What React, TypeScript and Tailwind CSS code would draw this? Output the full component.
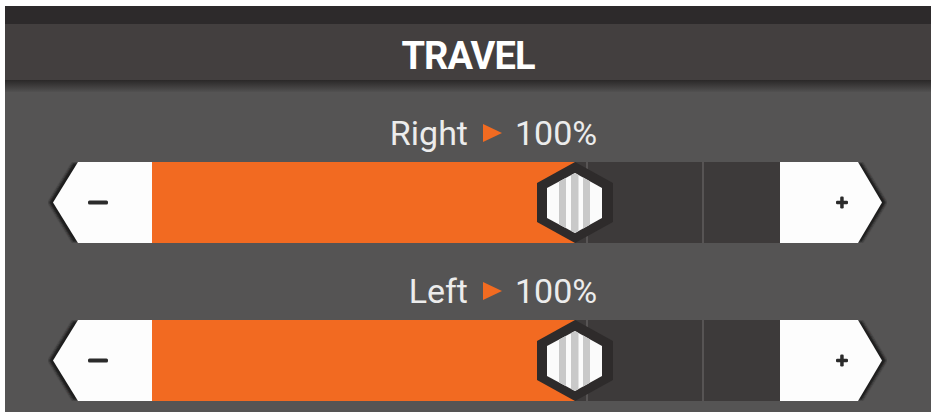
import React from 'react';

type Channel = {
  label: string;
  value: number;
};

const channels: Channel[] = [
  { label: 'Right', value: 100 },
  { label: 'Left', value: 100 },
];

const StepLeft: React.FC = () => (
  <svg width="104" height="81" viewBox="0 0 104 81" className="shrink-0">
    <defs>
      <filter id="edgeL" x="-20%" y="-20%" width="140%" height="140%">
        <feGaussianBlur stdDeviation="1.2" />
      </filter>
    </defs>
    <polygon points="1,40.5 25,1 50,1 50,80 25,80" fill="#1c1a1a" filter="url(#edgeL)" />
    <polygon points="5,40.5 30,0 104,0 104,81 30,81" fill="#fdfdfd" />
    <rect x="40" y="38.5" width="20" height="4" rx="1.5" fill="#2b2b2b" />
  </svg>
);

const StepRight: React.FC = () => (
  <svg width="107" height="81" viewBox="0 0 107 81" className="shrink-0">
    <defs>
      <filter id="edgeR" x="-20%" y="-20%" width="140%" height="140%">
        <feGaussianBlur stdDeviation="1.2" />
      </filter>
    </defs>
    <polygon points="50,1 82,1 106,40.5 82,80 50,80" fill="#1c1a1a" filter="url(#edgeR)" />
    <polygon points="0,0 78,0 102,40.5 78,81 0,81" fill="#fdfdfd" />
    <rect x="56" y="38.8" width="12" height="3.5" rx="1.2" fill="#2b2b2b" />
    <rect x="60.2" y="34.5" width="3.5" height="12" rx="1.2" fill="#2b2b2b" />
  </svg>
);

const Thumb: React.FC = () => (
  <svg width="76" height="81" viewBox="0 0 76 81" className="absolute top-0 left-[385px]">
    <defs>
      <clipPath id="thumbHex">
        <polygon points="38,11 65,26 65,56 38,71 10,56 10,26" />
      </clipPath>
    </defs>
    <polygon points="38,0 76,21 76,60 38,81 0,60 0,21" fill="#2e2b2b" />
    <polygon points="38,11 65,26 65,56 38,71 10,56 10,26" fill="#fbfbfb" />
    <g clipPath="url(#thumbHex)" fill="#c9c9c9">
      <rect x="22" y="0" width="7" height="81" />
      <rect x="34" y="0" width="7.5" height="81" />
      <rect x="46" y="0" width="7" height="81" />
    </g>
  </svg>
);

const TravelSlider: React.FC<{ channel: Channel }> = ({ channel }) => (
  <div className="flex flex-col">
    {/* name is right-aligned to the marker so the value stays in place */}
    <div className="flex items-center h-[34px] leading-none text-[34px] text-[#ececec] font-['Roboto',sans-serif]">
      <span className="w-[463px] text-right">{channel.label}</span>
      <svg width="19" height="18" viewBox="0 0 19 18" className="ml-[15px] mr-[13px] shrink-0">
        <polygon points="0,0 19,9 0,18" fill="#f26b21" />
      </svg>
      <span>{channel.value}%</span>
    </div>
    <div className="mt-[12px] flex h-[81px] pl-[43px]">
      <StepLeft />
      <div className="relative w-[628px] h-full bg-[#3d3a3a] shrink-0">
        <div className="h-full w-[423px] bg-[#f26a21]" />
        <div className="absolute top-0 bottom-0 left-[434px] w-[2px] bg-[#575454]" />
        <div className="absolute top-0 bottom-0 left-[550px] w-[2px] bg-[#575454]" />
        <Thumb />
      </div>
      <StepRight />
    </div>
  </div>
);

const App: React.FC = () => {
  return (
    <div className="w-[931px] h-[412px] overflow-hidden bg-white pt-[6px] pl-[5px] flex flex-col">
      <div className="flex-1 flex flex-col bg-[#555454]">
        {/* title bar */}
        <div className="h-[18px] bg-[#2d2a2b]" />
        <div className="h-[56px] bg-[#433f3f] flex items-center justify-center pt-[8px]">
          <h1 className="text-[38px] font-bold leading-none text-white tracking-tight font-['Roboto',sans-serif]">
            TRAVEL
          </h1>
        </div>
        <div className="h-[12px] bg-linear-to-b from-[#2a2828] to-[#525151]" />

        <div className="flex flex-col pt-[24px] gap-[31px]">
          {channels.map((c) => (
            <TravelSlider key={c.label} channel={c} />
          ))}
        </div>
      </div>
    </div>
  );
};

export default App;
